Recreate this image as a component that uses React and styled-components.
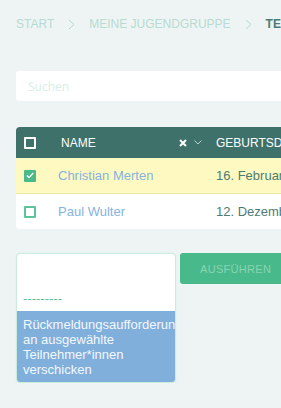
import React from 'react';
import styled, { createGlobalStyle } from 'styled-components';

const GlobalStyle = createGlobalStyle`
  html, body {
    margin: 0;
    padding: 0;
    overflow: hidden;
    background: #eef4f4;
  }
  * { box-sizing: border-box; }
`;

const Page = styled.div`
  padding: 16px 0 0 16px;
  width: 700px;
  font-family: "Liberation Sans", Arial, sans-serif;
`;

const Breadcrumb = styled.nav`
  display: flex;
  align-items: center;
  gap: 14px;
  height: 16px;
  font-size: 12px;
  white-space: nowrap;
`;

const Crumb = styled.span`
  color: ${(p) => (p.$active ? '#4b7c74' : '#b7dbd0')};
  font-weight: ${(p) => (p.$active ? 700 : 400)};
  line-height: 16px;
`;

const Search = styled.input`
  display: block;
  margin-top: 39px;
  width: 560px;
  height: 30px;
  border: none;
  border-radius: 3px;
  background: #fff;
  padding: 0 12px;
  font-family: "Open Sans", sans-serif;
  font-size: 12px;
  outline: none;
  &::placeholder { color: #d7eee6; }
`;

const Table = styled.div`
  margin-top: 26px;
  width: 520px;
  border-radius: 4px;
  overflow: hidden;
  background: #fff;
`;

const Row = styled.div`
  display: grid;
  grid-template-columns: 42px 158px 1fr;
  align-items: center;
  height: ${(p) => p.$h}px;
  background: ${(p) => p.$bg || '#fff'};
  border-bottom: ${(p) => (p.$line ? `1px solid ${p.$line}` : 'none')};
`;

const Head = styled(Row)`
  background: #3e716a;
  color: #fff;
  font-size: 12px;
`;

const CheckCell = styled.div`
  padding-left: 8px;
  display: flex;
  align-items: center;
`;

const Box = styled.span`
  display: inline-flex;
  align-items: center;
  justify-content: center;
  width: 12px;
  height: 12px;
  border-radius: 1px;
  border: 2px solid ${(p) => p.$color};
  background: ${(p) => (p.$checked ? p.$color : 'transparent')};
`;

const NameHead = styled.div`
  display: flex;
  align-items: center;
  padding: 0 14px 0 3px;
`;

const HeadLabel = styled.span`
  flex: 1;
`;

const HeadTools = styled.span`
  display: flex;
  align-items: center;
  gap: 7px;
`;

const Name = styled.a`
  color: #86b3df;
  font-size: 13px;
  text-decoration: none;
`;

const DateCell = styled.div`
  color: #4d7b74;
  font-size: 13px;
  white-space: nowrap;
`;

const Actions = styled.div`
  margin-top: 24px;
  display: flex;
  align-items: flex-start;
  gap: 4px;
`;

const Select = styled.div`
  width: 160px;
  border-radius: 4px;
  border: 1px solid #c9ecdc;
  box-shadow: 0 0 2px #d5f1e4;
  background: #fff;
  overflow: hidden;
  font-size: 13px;
  line-height: 15px;
`;

const Option = styled.div`
  padding: ${(p) => p.$pad};
  color: ${(p) => p.$color};
  background: ${(p) => p.$bg || 'transparent'};
  white-space: ${(p) => (p.$wrap ? 'normal' : 'nowrap')};
  overflow: hidden;
`;

const LongWord = styled.span`
  white-space: nowrap;
`;

const RunButton = styled.button`
  width: 200px;
  height: 31px;
  border: none;
  border-radius: 3px;
  background: #48b98b;
  color: #8ad4b2;
  font-family: "Liberation Sans", Arial, sans-serif;
  font-size: 11px;
  text-align: left;
  padding: 0 0 0 20px;
  letter-spacing: 0.3px;
`;

const Chevron = () => (
  <svg width="7" height="11" viewBox="0 0 7 11">
    <polyline points="1,1 6,5.5 1,10" fill="none" stroke="#b7dbd0" strokeWidth="1" />
  </svg>
);

function App() {
  return (
    <Page>
      <GlobalStyle />
      <Breadcrumb>
        <Crumb>START</Crumb>
        <Chevron />
        <Crumb>MEINE JUGENDGRUPPE</Crumb>
        <Chevron />
        <Crumb $active>TEILNEHMER*INNEN</Crumb>
      </Breadcrumb>

      <Search placeholder="Suchen" />

      <Table>
        <Head $h={31}>
          <CheckCell><Box $color="#fff" /></CheckCell>
          <NameHead>
            <HeadLabel>NAME</HeadLabel>
            <HeadTools>
              <svg width="8" height="8" viewBox="0 0 8 8">
                <path d="M1 1L7 7M7 1L1 7" stroke="#fff" strokeWidth="2" />
              </svg>
              <svg width="8" height="5" viewBox="0 0 8 5">
                <polyline points="0.5,0.5 4,4 7.5,0.5" fill="none" stroke="#b4d0cb" strokeWidth="1" />
              </svg>
            </HeadTools>
          </NameHead>
          <div>GEBURTSDATUM</div>
        </Head>
        <Row $h={36} $bg="#fdf9c1" $line="#ebe6a4">
          <CheckCell>
            <Box $color="#4cb98a" $checked>
              <svg width="8" height="7" viewBox="0 0 8 7">
                <polyline points="0.8,3.6 3,5.6 7.2,1" fill="none" stroke="#fff" strokeWidth="1.4" />
              </svg>
            </Box>
          </CheckCell>
          <Name href="#">Christian Merten</Name>
          <DateCell>16. Februar 2005</DateCell>
        </Row>
        <Row $h={35}>
          <CheckCell><Box $color="#5cc49a" /></CheckCell>
          <Name href="#">Paul Wulter</Name>
          <DateCell>12. Dezember 2006</DateCell>
        </Row>
      </Table>

      <Actions>
        <Select>
          <Option $pad="37px 6px 5px" $color="#5cbf95">---------</Option>
          <Option $pad="6px 6px 5px" $color="#f3f8fc" $bg="#80afdc" $wrap>
            <LongWord>Rückmeldungsaufforderung</LongWord> an ausgewählte Teilnehmer*innen verschicken
          </Option>
        </Select>
        <RunButton>AUSFÜHREN</RunButton>
      </Actions>
    </Page>
  );
}

export default App;
